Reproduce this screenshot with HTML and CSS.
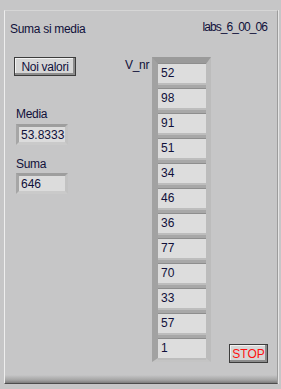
FILE: index.html
```html
<!DOCTYPE html>
<html lang="ro">
<head>
    <meta charset="UTF-8">
    <title>Suma si media</title>
    <link rel="stylesheet" href="styles.css">
</head>
<body>
    <div class="panel">
        <div class="head">
            <span class="title">Suma si media</span>
            <span class="vi-name">labs_6_00_06</span>
        </div>
        <div class="main">
            <div class="left">
                <button class="btn btn-noi">Noi valori</button>
                <div class="label label-media">Media</div>
                <div class="indicator">53.8333</div>
                <div class="label label-suma">Suma</div>
                <div class="indicator">646</div>
            </div>
            <div class="array-label">V_nr</div>
            <div class="array">
                <div class="cell">52</div>
                <div class="cell">98</div>
                <div class="cell">91</div>
                <div class="cell">51</div>
                <div class="cell">34</div>
                <div class="cell">46</div>
                <div class="cell">36</div>
                <div class="cell">77</div>
                <div class="cell">70</div>
                <div class="cell">33</div>
                <div class="cell">57</div>
                <div class="cell">1</div>
            </div>
            <div class="right">
                <button class="btn btn-stop">STOP</button>
            </div>
        </div>
    </div>
</body>
</html>
```

FILE: styles.css
```css
body { margin: 0; background: #c6c6c7; font-family: "Liberation Sans", Arial, sans-serif; font-size: 12px; line-height: 14px; color: #10103a; }
.panel { margin: 10px 0 0 4px; width: 272px; height: 372px; border-left: 1px solid #eeeeee; border-top: 1px solid #d6d6d6; border-right: 1px solid #9c9c9c; border-bottom: 1px solid #4c4c4c; box-shadow: 1px 0 0 #e6e6e6; background: linear-gradient(to bottom, #c6c6c7 calc(100% - 8px), #a4a4a4 calc(100% - 3px), #7c7c7c); }
.head { display: flex; justify-content: space-between; padding: 9px 10px 0 5px; height: 27px; box-sizing: border-box; }
.title { margin-top: 2px; letter-spacing: -0.3px; }
.vi-name { letter-spacing: -0.9px; }
.main { display: flex; margin-top: 19px; }
.left { width: 111px; padding-left: 9px; display: flex; flex-direction: column; align-items: flex-start; }
.btn { font-family: "Liberation Sans", Arial, sans-serif; font-size: 12px; line-height: 14px; background: #d6d6d6; border: 1px solid #3c3c3c; box-shadow: inset -2px -2px 0 #8c8c8c, inset 1px 1px 0 #f2f2f2; padding: 0; height: 19px; color: #10103a; }
.btn-noi { width: 62px; letter-spacing: -0.3px; }
.label { margin-left: 2px; letter-spacing: -0.3px; }
.label-media { margin-top: 31px; }
.label-suma { margin-top: 12px; }
.indicator { margin: 3px 0 0 2px; width: 52px; height: 21px; box-sizing: border-box; border-style: solid; border-width: 3px; border-color: #9e9e9e #c2c2c2 #cacaca #a6a6a6; background: #dcdcdc; padding: 1px 0 0 2px; line-height: 15px; }
.indicator + .label-suma + .indicator { margin-top: 2px; }
.array-label { width: 27px; margin-top: 1px; letter-spacing: -0.3px; }
.array { width: 48px; border-style: solid; border-width: 7px 5px 4px 6px; border-color: #9a9a9a #bcbcbc #c4c4c4 #a2a2a2; background: #a8a8a8; display: flex; flex-direction: column; gap: 6px; }
.cell { height: 19px; box-sizing: border-box; background: #dddddd; padding: 1px 0 0 3px; line-height: 17px; box-shadow: 0 2px 0 #bdbdbd, 0 -1px 0 #8e8e8e; }
.right { display: flex; align-items: flex-end; padding-left: 18px; }
.btn-stop { width: 39px; color: #ff1010; margin-bottom: -1px; }
```
